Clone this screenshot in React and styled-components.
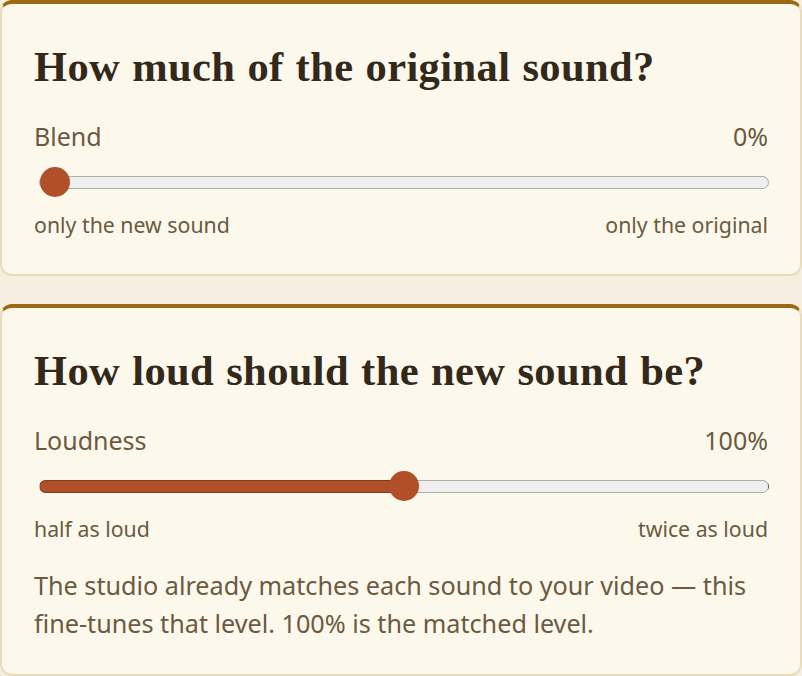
import React, { useState } from "react";
import styled, { createGlobalStyle } from "styled-components";

const Global = createGlobalStyle`
  html, body { margin: 0; padding: 0; background: #f6eee0; }
  body { font-family: "Noto Sans", "Open Sans", sans-serif; }
  * { box-sizing: border-box; }
`;

const Page = styled.div`
  display: flex;
  flex-direction: column;
  gap: 28px;
`;

const Card = styled.section`
  background: #fdf8ec;
  border: 2px solid #e8dcbc;
  border-top: 4px solid #9c6a12;
  border-radius: 12px;
  padding: 38px 32px ${(p) => p.$bottom || 35}px;
`;

const Heading = styled.h2`
  margin: 0 0 29px;
  font-family: "Liberation Serif", "DejaVu Serif", serif;
  font-weight: 700;
  font-size: 42.5px;
  letter-spacing: 0.4px;
  word-spacing: 1px;
  line-height: 50px;
  color: #33291a;
`;

const LabelRow = styled.div`
  display: flex;
  justify-content: space-between;
  font-size: 25px;
  line-height: 31px;
  color: #6b5a40;
`;

const Hints = styled.div`
  display: flex;
  justify-content: space-between;
  font-size: 21.3px;
  line-height: 27px;
  color: #6b5a40;
`;

const Range = styled.input`
  -webkit-appearance: none;
  appearance: none;
  display: block;
  width: calc(100% - 4px);
  height: 30px;
  margin: 15px 0 14px 5px;
  background: transparent;
  cursor: pointer;

  &::-webkit-slider-runnable-track {
    height: 13px;
    border: 1.5px solid rgba(0, 0, 0, 0.28);
    border-radius: 8px;
    background: ${(p) =>
      `linear-gradient(to right, #b04f28 0%, #b04f28 ${p.$pct}%, #efefef ${p.$pct}%, #efefef 100%)`};
  }

  &::-webkit-slider-thumb {
    -webkit-appearance: none;
    appearance: none;
    width: 30px;
    height: 30px;
    margin-top: -10px;
    border-radius: 50%;
    background: #b04f28;
    border: none;
  }

  &:focus { outline: none; }
`;

const Note = styled.p`
  margin: 24px 0 0;
  font-size: 25.2px;
  line-height: 38px;
  color: #6b5a40;
`;

function Slider({ label, value, display, left, right }) {
  const [v, setV] = useState(value);
  return (
    <div>
      <LabelRow>
        <span>{label}</span>
        <span>{display(v)}</span>
      </LabelRow>
      <Range
        type="range"
        min={0}
        max={100}
        value={v}
        $pct={v}
        onChange={(e) => setV(Number(e.target.value))}
      />
      <Hints>
        <span>{left}</span>
        <span>{right}</span>
      </Hints>
    </div>
  );
}

export default function App() {
  return (
    <>
      <Global />
      <Page>
        <Card $bottom={36}>
          <Heading>How much of the original sound?</Heading>
          <Slider
            label="Blend"
            value={0}
            display={(v) => `${v}%`}
            left="only the new sound"
            right="only the original"
          />
        </Card>
        <Card $bottom={32}>
          <Heading>How loud should the new sound be?</Heading>
          <Slider
            label="Loudness"
            value={50}
            display={(v) => `${Math.round(50 * Math.pow(4, v / 100))}%`}
            left="half as loud"
            right="twice as loud"
          />
          <Note>
            The studio already matches each sound to your video — this
            fine-tunes that level. 100% is the matched level.
          </Note>
        </Card>
      </Page>
    </>
  );
}
